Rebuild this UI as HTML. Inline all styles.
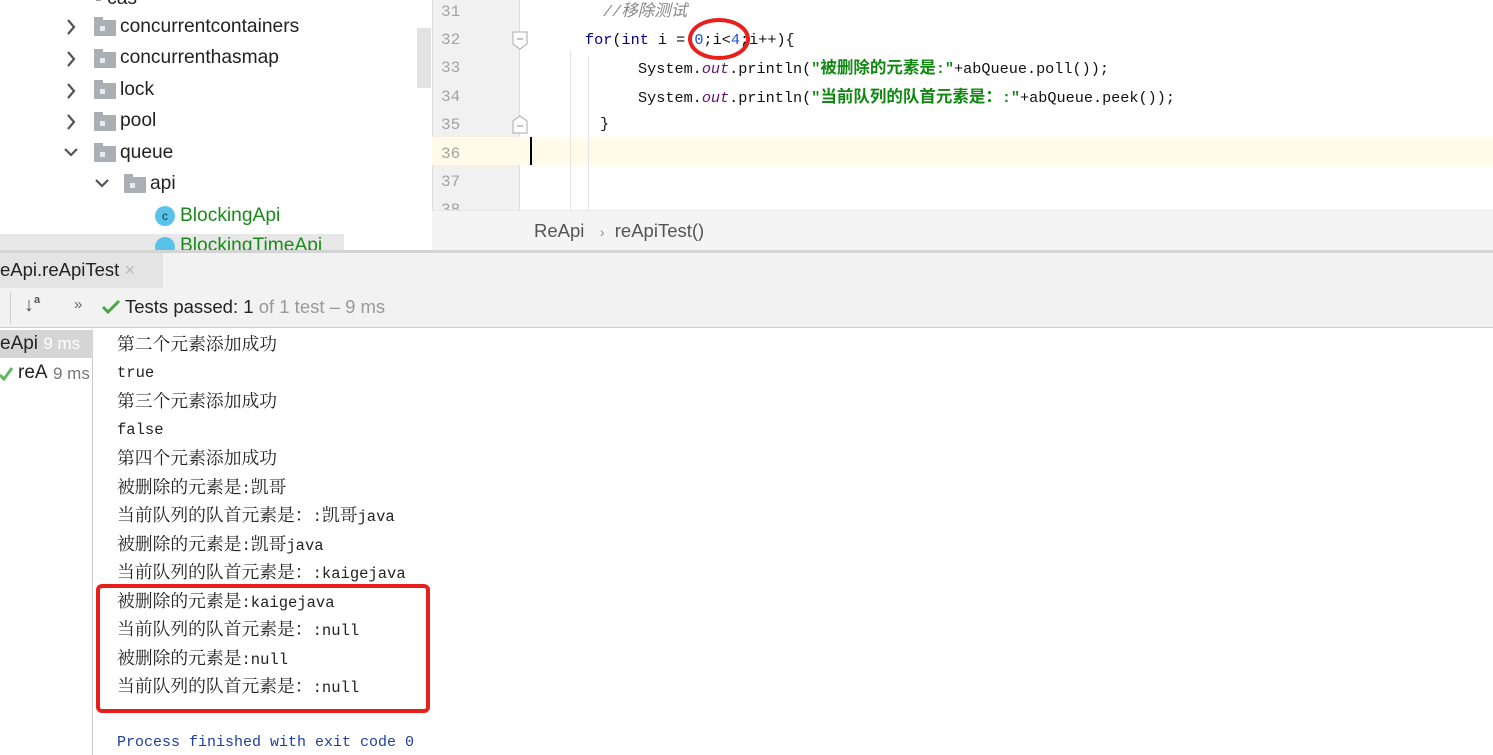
<!DOCTYPE html>
<html><head><meta charset="utf-8"><style>
*{margin:0;padding:0;box-sizing:border-box}
body{width:1493px;height:755px;overflow:hidden;background:#fff;position:relative;font-family:"Liberation Sans","Noto Sans CJK SC",sans-serif}
.a{position:absolute;white-space:nowrap}
.tree{font-size:19.2px;color:#222}
.fold{width:22px;height:16px;background:#a9afb5;border-radius:1px}
.fold:before{content:"";position:absolute;left:0;top:-3px;width:9px;height:4px;background:#a9afb5}
.fold:after{content:"";position:absolute;left:6px;top:6px;width:5px;height:5px;background:#e8ebee}
.ln{font-family:"Liberation Mono",monospace;font-size:16px;color:#a3a3a3;left:441px}
.code{font-family:"Liberation Mono","Noto Sans CJK SC",monospace;font-size:15.2px;color:#111;line-height:22px}
.code .c{font-size:16.5px}
.con{font-family:"Liberation Mono","Noto Serif CJK SC",monospace;font-size:15.5px;color:#222;left:117px;line-height:22px}
.con .c{font-size:17.8px;font-family:"Noto Serif CJK SC",serif}
.str{color:#118811;font-weight:bold;font-family:"Liberation Mono","Noto Sans CJK SC",monospace}
</style></head><body>
<div class="a" style="left:417px;top:28px;width:14px;height:60px;background:#e2e2e2"></div>
<div class="a tree" style="left:95px;top:-12px;color:#222">▪ cas</div>
<svg class="a" style="left:64px;top:0" width="16" height="170"><g fill="none" stroke="#555" stroke-width="2.2"><path d="M4 20l6 7-6 7"/><path d="M4 52l6 7-6 7"/><path d="M4 84l6 7-6 7"/><path d="M4 115l6 7-6 7"/><path d="M1 149l6 6 6-6"/></g></svg>
<svg class="a" style="left:95px;top:176px" width="16" height="16"><path d="M1 4l6 6 6-6" fill="none" stroke="#555" stroke-width="2.2"/></svg>
<div class="a fold" style="left:94px;top:20px"></div><div class="a tree" style="left:120px;top:16px">concurrentcontainers</div>
<div class="a fold" style="left:94px;top:52px"></div><div class="a tree" style="left:120px;top:47px">concurrenthasmap</div>
<div class="a fold" style="left:94px;top:83px"></div><div class="a tree" style="left:120px;top:79px">lock</div>
<div class="a fold" style="left:94px;top:115px"></div><div class="a tree" style="left:120px;top:110px">pool</div>
<div class="a fold" style="left:94px;top:146px"></div><div class="a tree" style="left:120px;top:142px">queue</div>
<div class="a fold" style="left:124px;top:177px"></div><div class="a tree" style="left:150px;top:173px">api</div>
<div class="a" style="left:0;top:234px;width:344px;height:16px;background:#e8e8e8"></div>
<div class="a" style="left:155px;top:206px;width:20px;height:20px;border-radius:50%;background:#5bc2e7;color:#234;font-size:12px;text-align:center;line-height:20px">c</div>
<div class="a tree" style="left:180px;top:205px;color:#1a8a1a">BlockingApi</div>
<div class="a" style="left:155px;top:237px;width:20px;height:13px;overflow:hidden"><div style="width:20px;height:20px;border-radius:50%;background:#5bc2e7"></div></div>
<div class="a" style="left:180px;top:235px;height:15px;overflow:hidden"><div class="tree" style="color:#1a8a1a">BlockingTimeApi</div></div>
<div class="a" style="left:432px;top:0;width:88px;height:210px;background:#f1f1f1;border-left:1px solid #ddd;border-right:1px solid #ddd"></div>
<div class="a" style="left:432px;top:137px;width:1061px;height:28px;background:#fefbe9"></div>
<div class="a" style="left:570px;top:50px;width:1px;height:160px;background:#e4e4e4"></div>
<div class="a" style="left:588px;top:55px;width:1px;height:155px;background:#e4e4e4"></div>
<div class="a ln" style="top:3px">31</div><div class="a ln" style="top:31px">32</div><div class="a ln" style="top:59px">33</div><div class="a ln" style="top:88px">34</div><div class="a ln" style="top:116px">35</div><div class="a ln" style="top:145px">36</div><div class="a ln" style="top:173px">37</div><div class="a ln" style="top:201px;height:9px;overflow:hidden">38</div>
<svg class="a" style="left:511px;top:31px" width="18" height="20"><path d="M2 1h14v12l-7 5-7-5z" fill="#fff" stroke="#aaa"/><path d="M6 8h6" stroke="#888"/></svg>
<svg class="a" style="left:511px;top:114px" width="18" height="20"><path d="M2 19h14V7L9 2 2 7z" fill="#fff" stroke="#aaa"/><path d="M6 12h6" stroke="#888"/></svg>
<div class="a code" style="left:603px;top:1px;color:#888;font-style:italic">//<span class="c">移除测试</span></div>
<div class="a code" style="left:585px;top:29px"><span style="color:#00008b">for</span>(<span style="color:#00008b">int</span> i = <span style="color:#1750eb">0</span>;i&lt;<span style="color:#1750eb">4</span>;i++){</div>
<div class="a code" style="left:638px;top:58px">System.<i style="color:#660e7a">out</i>.println(<span class="str">"<span class="c">被删除的元素是</span>:"</span>+abQueue.poll());</div>
<div class="a code" style="left:638px;top:87px">System.<i style="color:#660e7a">out</i>.println(<span class="str">"<span class="c">当前队列的队首元素是：</span>:"</span>+abQueue.peek());</div>
<div class="a code" style="left:600px;top:113px">}</div>
<div class="a" style="left:530px;top:137px;width:2px;height:28px;background:#000"></div>
<div class="a" style="left:688px;top:18px;width:62px;height:42px;border:4px solid #e8201c;border-radius:50%"></div>
<div class="a" style="left:432px;top:210px;width:1061px;height:40px;background:#f4f4f4;border-top:1px solid #e6e6e6"></div>
<div class="a" style="left:534px;top:220px;font-size:18.5px;color:#555">ReApi&nbsp;&nbsp;&nbsp;<span style="font-size:14px;color:#888">›</span>&nbsp;&nbsp;reApiTest()</div>
<div class="a" style="left:0;top:250px;width:1493px;height:3px;background:#d4d4d4"></div>
<div class="a" style="left:0;top:253px;width:1493px;height:75px;background:#f2f2f2;border-bottom:1px solid #ccc"></div>
<div class="a" style="left:0;top:253px;width:163px;height:35px;background:#e4e4e4"></div>
<div class="a" style="left:0;top:259px;font-size:18.5px;color:#222">eApi.reApiTest <span style="color:#bbb">×</span></div>
<div class="a" style="left:10px;top:292px;width:1px;height:32px;background:#ccc"></div>
<div class="a" style="left:24px;top:294px;font-size:20px;color:#555;font-weight:bold">↓<span style="font-size:11px;vertical-align:top">a</span></div>
<div class="a" style="left:74px;top:296px;font-size:15px;color:#666">»</div>
<svg class="a" style="left:101px;top:299px" width="20" height="16"><path d="M2 8l5 5 11-11" fill="none" stroke="#4aa64a" stroke-width="3"/></svg>
<div class="a" style="left:125px;top:296px;font-size:18.5px;color:#222">Tests passed: 1 <span style="color:#999">of 1 test – 9 ms</span></div>
<div class="a" style="left:0;top:329px;width:93px;height:426px;background:#fff;border-right:1px solid #ccc"></div>
<div class="a" style="left:0;top:330px;width:93px;height:28px;background:#d5d5d5"></div>
<div class="a" style="left:0;top:333px;font-size:19px;color:#222">eApi <span style="font-size:17px;color:#fff">9 ms</span></div>
<svg class="a" style="left:0;top:366px" width="14" height="16"><path d="M0 9l4 4 8-11" fill="none" stroke="#5cb85c" stroke-width="3"/></svg>
<div class="a" style="left:18px;top:362px;font-size:19px;color:#222">reA</div>
<div class="a" style="left:53px;top:364px;font-size:17px;color:#777">9 ms</div>
<div class="a con" style="top:333px"><span class="c">第二个元素添加成功</span></div>
<div class="a con" style="top:362px">true</div>
<div class="a con" style="top:390px"><span class="c">第三个元素添加成功</span></div>
<div class="a con" style="top:419px">false</div>
<div class="a con" style="top:447px"><span class="c">第四个元素添加成功</span></div>
<div class="a con" style="top:476px"><span class="c">被删除的元素是</span>:<span class="c">凯哥</span></div>
<div class="a con" style="top:504px"><span class="c">当前队列的队首元素是：</span>:<span class="c">凯哥</span>java</div>
<div class="a con" style="top:533px"><span class="c">被删除的元素是</span>:<span class="c">凯哥</span>java</div>
<div class="a con" style="top:561px"><span class="c">当前队列的队首元素是：</span>:kaigejava</div>
<div class="a con" style="top:590px"><span class="c">被删除的元素是</span>:kaigejava</div>
<div class="a con" style="top:618px"><span class="c">当前队列的队首元素是：</span>:null</div>
<div class="a con" style="top:647px"><span class="c">被删除的元素是</span>:null</div>
<div class="a con" style="top:675px"><span class="c">当前队列的队首元素是：</span>:null</div>
<div class="a con" style="top:732px;color:#1f3e9e;font-size:15px">Process finished with exit code 0</div>
<div class="a" style="left:96px;top:584px;width:334px;height:129px;border:4px solid #e8201c;border-radius:6px"></div>
</body></html>
